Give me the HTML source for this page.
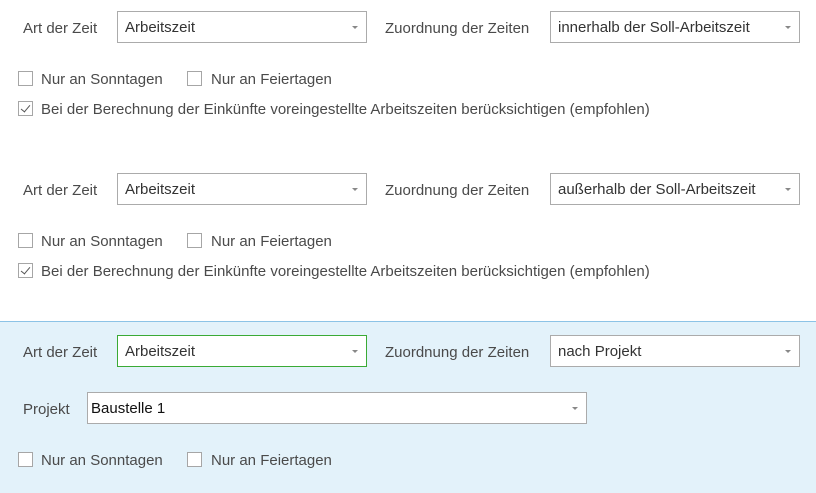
<!DOCTYPE html>
<html><head><meta charset="utf-8"><style>
*{box-sizing:border-box;margin:0;padding:0}
body{width:816px;height:493px;background:#fff;font-family:"Liberation Sans",sans-serif;font-size:15px;color:#4a4a4a;position:relative;overflow:hidden}
.a{position:absolute;white-space:nowrap}
.lbl{line-height:20px;margin-top:2px}
.dd{position:absolute;height:32px;border:1px solid #ababab;background:#fff;padding-left:7px;padding-top:1px;line-height:30px;color:#333}
.dd:after{content:"";position:absolute;right:8px;top:14px;border-left:3px solid transparent;border-right:3px solid transparent;border-top:3px solid #888}
.cb{position:absolute;width:15px;height:15px;border:1px solid #a6a6a6;background:#fff}
.chk:after{content:"";position:absolute;left:4px;top:1px;width:4px;height:8px;border-right:1.5px solid #555;border-bottom:1.5px solid #555;transform:rotate(40deg)}
.sec{position:absolute;left:0;top:321px;width:816px;height:172px;background:#e3f2fa;border-top:1px solid #8cc3e6}
</style></head><body>

<div class="a lbl" style="left:23px;top:17px">Art der Zeit</div>
<div class="dd" style="left:117px;top:11px;width:250px">Arbeitszeit</div>
<div class="a lbl" style="left:385px;top:17px">Zuordnung der Zeiten</div>
<div class="dd" style="left:550px;top:11px;width:250px">innerhalb der Soll-Arbeitszeit</div>
<div class="cb" style="left:18px;top:71px"></div><div class="a lbl" style="left:41px;top:68px">Nur an Sonntagen</div>
<div class="cb" style="left:187px;top:71px"></div><div class="a lbl" style="left:211px;top:68px">Nur an Feiertagen</div>
<div class="cb chk" style="left:18px;top:101px"></div><div class="a lbl" style="left:41px;top:98px">Bei der Berechnung der Einkünfte voreingestellte Arbeitszeiten berücksichtigen (empfohlen)</div>

<div class="a lbl" style="left:23px;top:179px">Art der Zeit</div>
<div class="dd" style="left:117px;top:173px;width:250px">Arbeitszeit</div>
<div class="a lbl" style="left:385px;top:179px">Zuordnung der Zeiten</div>
<div class="dd" style="left:550px;top:173px;width:250px">außerhalb der Soll-Arbeitszeit</div>
<div class="cb" style="left:18px;top:233px"></div><div class="a lbl" style="left:41px;top:230px">Nur an Sonntagen</div>
<div class="cb" style="left:187px;top:233px"></div><div class="a lbl" style="left:211px;top:230px">Nur an Feiertagen</div>
<div class="cb chk" style="left:18px;top:263px"></div><div class="a lbl" style="left:41px;top:260px">Bei der Berechnung der Einkünfte voreingestellte Arbeitszeiten berücksichtigen (empfohlen)</div>

<div class="sec"></div>
<div class="a lbl" style="left:23px;top:341px">Art der Zeit</div>
<div class="dd" style="left:117px;top:335px;width:250px;border-color:#3aaa35">Arbeitszeit</div>
<div class="a lbl" style="left:385px;top:341px">Zuordnung der Zeiten</div>
<div class="dd" style="left:550px;top:335px;width:250px">nach Projekt</div>
<div class="a lbl" style="left:23px;top:398px">Projekt</div>
<div class="dd" style="left:87px;top:392px;width:500px;padding-left:3px;color:#111">Baustelle 1</div>
<div class="cb" style="left:18px;top:452px"></div><div class="a lbl" style="left:41px;top:449px">Nur an Sonntagen</div>
<div class="cb" style="left:187px;top:452px"></div><div class="a lbl" style="left:211px;top:449px">Nur an Feiertagen</div>
</body></html>
